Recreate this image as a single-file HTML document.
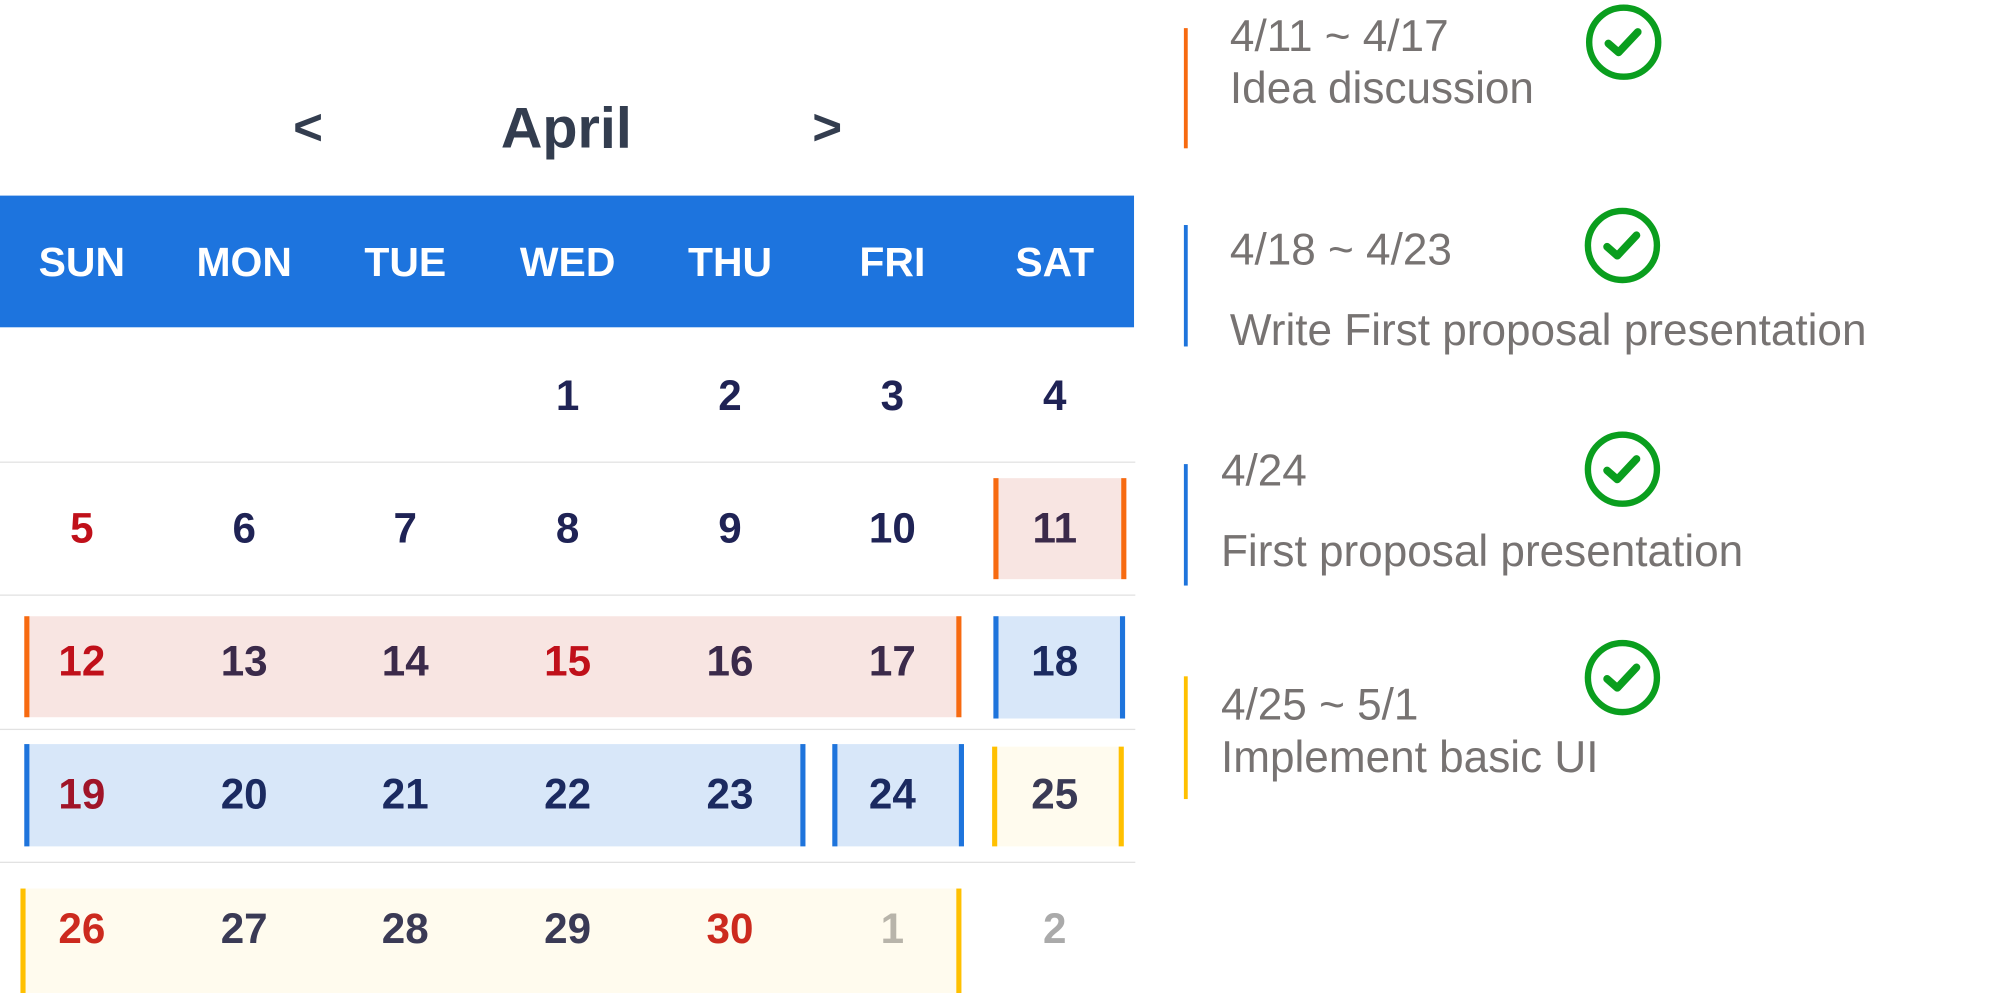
<!DOCTYPE html>
<html><head><meta charset="utf-8"><style>
html,body{margin:0;padding:0;background:#fff;overflow:hidden}
body{width:1998px;height:993px;position:relative}
#r{position:absolute;left:0;top:0;width:1563px;height:777px;transform:scale(1.2785);transform-origin:0 0;font-family:"Liberation Sans",Arial,sans-serif}
.a{position:absolute}
.c{position:absolute;width:120px;margin-left:-60px;text-align:center;line-height:1;transform:translateY(-50%)}
.n{font-weight:bold;font-size:33px;color:#1f2355}
.d{font-weight:bold;font-size:32px;color:#fff}
.sep{position:absolute;left:0;width:888px;height:1px;background:#e2e2e2}
.box{position:absolute;box-sizing:border-box;border-left:4px solid;border-right:4px solid}
.o{background:#f8e5e2;border-color:#f76a10}
.b{background:#d8e7f9;border-color:#1e74dc}
.y{background:#fffbee;border-color:#ffc000}
.t{position:absolute;color:#777372;font-size:34.5px;line-height:1;white-space:nowrap;transform:translateY(-50%)}
.bar{position:absolute;left:926px;width:3px}
.ck{position:absolute;width:64px;height:64px}
</style></head><body><div id="r">
<div class="c" style="left:241px;top:100px;font-weight:bold;font-size:40px;color:#333d4f">&lt;</div>
<div class="c" style="left:443px;top:100px;font-weight:bold;font-size:45px;color:#333d4f;width:200px;margin-left:-100px">April</div>
<div class="c" style="left:647px;top:100px;font-weight:bold;font-size:40px;color:#333d4f">&gt;</div>
<div class="a" style="left:0;top:153px;width:887px;height:103px;background:#1d74de"></div>
<div class="c d" style="left:64px;top:205px">SUN</div>
<div class="c d" style="left:191px;top:205px">MON</div>
<div class="c d" style="left:317px;top:205px">TUE</div>
<div class="c d" style="left:444px;top:205px">WED</div>
<div class="c d" style="left:571px;top:205px">THU</div>
<div class="c d" style="left:698px;top:205px">FRI</div>
<div class="c d" style="left:825px;top:205px">SAT</div>
<div class="sep" style="top:361px"></div>
<div class="sep" style="top:465px"></div>
<div class="sep" style="top:570px"></div>
<div class="sep" style="top:674px"></div>
<div class="box o" style="left:777px;top:374px;width:104px;height:79px"></div>
<div class="box o" style="left:19px;top:482px;width:733px;height:79px"></div>
<div class="box b" style="left:777px;top:482px;width:103px;height:80px"></div>
<div class="box b" style="left:19px;top:582px;width:611px;height:80px"></div>
<div class="box b" style="left:651px;top:582px;width:103px;height:80px"></div>
<div class="box y" style="left:776px;top:584px;width:103px;height:78px"></div>
<div class="box y" style="left:16px;top:695px;width:736px;height:82px;border-right-width:4px"></div>
<div class="c n" style="left:444px;top:309px">1</div>
<div class="c n" style="left:571px;top:309px">2</div>
<div class="c n" style="left:698px;top:309px">3</div>
<div class="c n" style="left:825px;top:309px">4</div>
<div class="c n" style="left:64px;top:413px;color:#c0101a">5</div>
<div class="c n" style="left:191px;top:413px">6</div>
<div class="c n" style="left:317px;top:413px">7</div>
<div class="c n" style="left:444px;top:413px">8</div>
<div class="c n" style="left:571px;top:413px">9</div>
<div class="c n" style="left:698px;top:413px">10</div>
<div class="c n" style="left:825px;top:413px;color:#3b2a4a">11</div>
<div class="c n" style="left:64px;top:517px;color:#c0101a">12</div>
<div class="c n" style="left:191px;top:517px;color:#3b2a4a">13</div>
<div class="c n" style="left:317px;top:517px;color:#3b2a4a">14</div>
<div class="c n" style="left:444px;top:517px;color:#c0101a">15</div>
<div class="c n" style="left:571px;top:517px;color:#3b2a4a">16</div>
<div class="c n" style="left:698px;top:517px;color:#3b2a4a">17</div>
<div class="c n" style="left:825px;top:517px;color:#1b2a60">18</div>
<div class="c n" style="left:64px;top:621px;color:#a01428">19</div>
<div class="c n" style="left:191px;top:621px;color:#1b2a60">20</div>
<div class="c n" style="left:317px;top:621px;color:#1b2a60">21</div>
<div class="c n" style="left:444px;top:621px;color:#1b2a60">22</div>
<div class="c n" style="left:571px;top:621px;color:#1b2a60">23</div>
<div class="c n" style="left:698px;top:621px;color:#1b2a60">24</div>
<div class="c n" style="left:825px;top:621px;color:#3a3a55">25</div>
<div class="c n" style="left:64px;top:726px;color:#cc2a1e">26</div>
<div class="c n" style="left:191px;top:726px;color:#3a3a55">27</div>
<div class="c n" style="left:317px;top:726px;color:#3a3a55">28</div>
<div class="c n" style="left:444px;top:726px;color:#3a3a55">29</div>
<div class="c n" style="left:571px;top:726px;color:#cc2a1e">30</div>
<div class="c n" style="left:698px;top:726px;color:#b8b4aa">1</div>
<div class="c n" style="left:825px;top:726px;color:#aaa">2</div>

<div class="bar" style="top:22px;height:94px;background:#f76a10"></div>
<div class="bar" style="top:176px;height:95px;background:#1e74dc"></div>
<div class="bar" style="top:363px;height:95px;background:#1e74dc"></div>
<div class="bar" style="top:529px;height:96px;background:#ffc000"></div>
<div class="t" style="left:962px;top:29px">4/11 ~ 4/17</div>
<div class="t" style="left:962px;top:70px">Idea discussion</div>
<div class="t" style="left:962px;top:196px">4/18 ~ 4/23</div>
<div class="t" style="left:962px;top:259px">Write First proposal presentation</div>
<div class="t" style="left:955px;top:369px">4/24</div>
<div class="t" style="left:955px;top:432px">First proposal presentation</div>
<div class="t" style="left:955px;top:552px">4/25 ~ 5/1</div>
<div class="t" style="left:955px;top:593px">Implement basic UI</div>

<svg class="ck" style="left:1238px;top:1px" viewBox="0 0 64 64"><circle cx="32" cy="32" r="27" fill="none" stroke="#0a9e1e" stroke-width="5"/><path d="M20 33 L28 40 L43 24" fill="none" stroke="#0a9e1e" stroke-width="6" stroke-linecap="round" stroke-linejoin="round"/></svg>
<svg class="ck" style="left:1237px;top:160px" viewBox="0 0 64 64"><circle cx="32" cy="32" r="27" fill="none" stroke="#0a9e1e" stroke-width="5"/><path d="M20 33 L28 40 L43 24" fill="none" stroke="#0a9e1e" stroke-width="6" stroke-linecap="round" stroke-linejoin="round"/></svg>
<svg class="ck" style="left:1237px;top:335px" viewBox="0 0 64 64"><circle cx="32" cy="32" r="27" fill="none" stroke="#0a9e1e" stroke-width="5"/><path d="M20 33 L28 40 L43 24" fill="none" stroke="#0a9e1e" stroke-width="6" stroke-linecap="round" stroke-linejoin="round"/></svg>
<svg class="ck" style="left:1237px;top:498px" viewBox="0 0 64 64"><circle cx="32" cy="32" r="27" fill="none" stroke="#0a9e1e" stroke-width="5"/><path d="M20 33 L28 40 L43 24" fill="none" stroke="#0a9e1e" stroke-width="6" stroke-linecap="round" stroke-linejoin="round"/></svg>
</div></body></html>
